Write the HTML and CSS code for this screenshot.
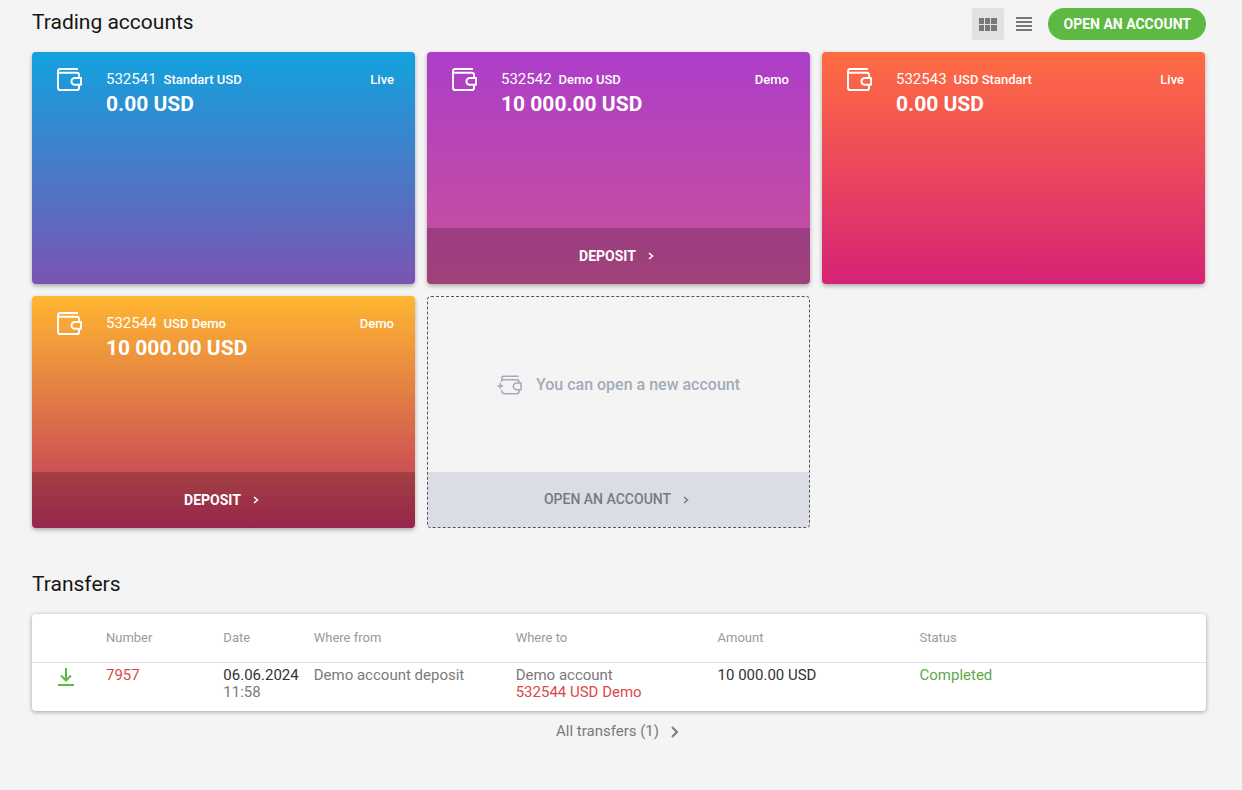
FILE: index.html
```html
<!DOCTYPE html>
<html lang="en">
<head>
<meta charset="utf-8">
<title>Trading accounts</title>
<meta name="viewport" content="width=device-width, initial-scale=1">
<link rel="stylesheet" href="styles.css">
</head>
<body>
<svg class="sprite" aria-hidden="true">
  <symbol id="wallet" viewBox="0 0 26 24" fill="none" stroke="currentColor" stroke-width="2" stroke-linecap="round" stroke-linejoin="round">
    <path d="M21 1H3.500Q1 1 1 3.500V20.500Q1 23 3.500 23H20.500Q23 23 23 20.500V18M1.500 5H20.500Q23 5 23 7.500V10"/>
    <path d="M25 10.500H18.500A3.500 3.500 0 0 0 18.500 17.500H25Z"/>
  </symbol>
  <symbol id="wallet-add" viewBox="0 0 26 20" fill="none" stroke="currentColor" stroke-width="1.600" stroke-linecap="round" stroke-linejoin="round">
    <path d="M22 1H7Q5 1 5 3V6M6 4.500H20.500Q23 4.500 23 7M23 15V16.500Q23 19 20.500 19H8Q5 19 5 16M1 11H6M3.500 8.500V13.500"/>
    <path d="M25 8H20.500A3.500 3.500 0 0 0 20.500 15H25Z"/>
  </symbol>
  <symbol id="chevron" viewBox="0 0 6 8" fill="none" stroke="currentColor" stroke-width="1.500">
    <path d="M1 1L4.500 4L1 7"/>
  </symbol>
</svg>
<main class="page">
  <section>
    <header class="toolbar">
      <h1 class="title">Trading accounts</h1>
      <div class="actions">
        <button class="view view-active" type="button" aria-label="Grid view">
          <svg width="18" height="13" viewBox="0 0 18 13" fill="currentColor"><path d="M0 0h5v6H0zM6 0h5v6H6zM12 0h6v6h-6zM0 7h5v6H0zM6 7h5v6H6zM12 7h6v6h-6z"/></svg>
        </button>
        <button class="view" type="button" aria-label="List view">
          <svg width="16" height="14" viewBox="0 0 16 14" fill="currentColor"><path d="M0 0h16v2H0zM0 4h16v2H0zM0 8h16v2H0zM0 12h16v2H0z"/></svg>
        </button>
        <button class="open" type="button">OPEN AN ACCOUNT</button>
      </div>
    </header>
    <div class="cards">
      <article class="card card-blue">
        <div class="card-head">
          <svg class="wallet"><use href="#wallet"/></svg>
          <div class="account">
            <div class="account-line"><span class="number">532541</span><span class="name">Standart USD</span><span class="kind">Live</span></div>
            <strong class="balance">0.00 USD</strong>
          </div>
        </div>
      </article>
      <article class="card card-purple">
        <div class="card-head">
          <svg class="wallet"><use href="#wallet"/></svg>
          <div class="account">
            <div class="account-line"><span class="number">532542</span><span class="name">Demo USD</span><span class="kind">Demo</span></div>
            <strong class="balance">10 000.00 USD</strong>
          </div>
        </div>
        <button class="card-action" type="button">DEPOSIT<svg class="chevron"><use href="#chevron"/></svg></button>
      </article>
      <article class="card card-red">
        <div class="card-head">
          <svg class="wallet"><use href="#wallet"/></svg>
          <div class="account">
            <div class="account-line"><span class="number">532543</span><span class="name">USD Standart</span><span class="kind">Live</span></div>
            <strong class="balance">0.00 USD</strong>
          </div>
        </div>
      </article>
      <article class="card card-orange">
        <div class="card-head">
          <svg class="wallet"><use href="#wallet"/></svg>
          <div class="account">
            <div class="account-line"><span class="number">532544</span><span class="name">USD Demo</span><span class="kind">Demo</span></div>
            <strong class="balance">10 000.00 USD</strong>
          </div>
        </div>
        <button class="card-action" type="button">DEPOSIT<svg class="chevron"><use href="#chevron"/></svg></button>
      </article>
      <article class="card card-new">
        <div class="new-text"><svg class="wallet-add"><use href="#wallet-add"/></svg>You can open a new account</div>
        <button class="card-action action-new" type="button">OPEN AN ACCOUNT<svg class="chevron"><use href="#chevron"/></svg></button>
      </article>
    </div>
  </section>
  <section class="transfers">
    <h2 class="title">Transfers</h2>
    <table class="table">
      <colgroup><col class="col-icon"><col class="col-number"><col class="col-date"><col class="col-wide"><col class="col-wide"><col class="col-wide"><col></colgroup>
      <thead>
        <tr><th></th><th>Number</th><th>Date</th><th>Where from</th><th>Where to</th><th>Amount</th><th>Status</th></tr>
      </thead>
      <tbody>
        <tr>
          <td class="icon-cell"><svg width="16" height="18" viewBox="0 0 16 18" fill="none" stroke="currentColor" stroke-width="2"><path d="M8 0V12M3 7.500L8 12.500L13 7.500M0 17H16"/></svg></td>
          <td><a class="link" href="#">7957</a></td>
          <td><span class="dark">06.06.2024</span><br>11:58</td>
          <td>Demo account deposit</td>
          <td>Demo account<br><a class="link" href="#">532544 USD Demo</a></td>
          <td class="dark">10 000.00 USD</td>
          <td class="done">Completed</td>
        </tr>
      </tbody>
    </table>
    <a class="all" href="#">All transfers (1)<svg width="8" height="12" viewBox="0 0 8 12" fill="none" stroke="currentColor" stroke-width="2"><path d="M1 1L6 6L1 11"/></svg></a>
  </section>
</main>
</body>
</html>
```
FILE: styles.css
```css
* { box-sizing: border-box; }
body {
  margin: 0;
  background: #f4f4f4;
  color: #7a7a7a;
  font: 14px/17px Roboto, "Liberation Sans", sans-serif;
}
button {
  border: 0;
  padding: 0;
  background: none;
  font: inherit;
  cursor: pointer;
}
a { text-decoration: none; }
.sprite { position: absolute; width: 0; height: 0; }
.page { padding: 8px 36px 24px 32px; }
.toolbar { display: flex; justify-content: space-between; margin-bottom: 12px; }
.title {
  margin: 0;
  color: #161616;
  font-size: 21px;
  font-weight: 400;
  line-height: 28px;
}
.actions { display: flex; align-items: center; gap: 4px; }
.view {
  display: flex;
  align-items: center;
  justify-content: center;
  width: 32px;
  height: 32px;
  border-radius: 2px;
  color: #777;
}
.view-active { background: #e1e1e1; }
.open {
  height: 32px;
  margin-left: 4px;
  padding: 0 15px;
  border-radius: 16px;
  background: #5cb942;
  color: #fff;
  font-size: 14px;
  font-weight: 700;
}
.cards {
  display: grid;
  grid-template-columns: repeat(3, 1fr);
  gap: 12px;
  padding-right: 1px;
}
.card {
  display: flex;
  flex-direction: column;
  justify-content: space-between;
  min-height: 232px;
  border-radius: 4px;
  overflow: hidden;
  color: #fff;
  box-shadow: 0 2px 4px rgba(0, 0, 0, .3);
}
.card-blue { background: linear-gradient(#12a2de, #7b54b2); }
.card-purple { background: linear-gradient(#ac3ec9, #ca5197); }
.card-red { background: linear-gradient(#ff6d42, #d62277); }
.card-orange { background: linear-gradient(#ffb631, #bc305e); }
.card-head { display: flex; gap: 24px; padding: 16px 21px 16px 25px; }
.wallet { flex: none; width: 25px; height: 23px; }
.account { flex: 1; padding-top: 1px; }
.account-line { display: flex; align-items: baseline; gap: 7px; line-height: 20px; }
.number { font-size: 15px; }
.name, .kind { font-size: 13px; font-weight: 500; }
.kind { margin-left: auto; }
.balance { display: block; font-size: 21px; font-weight: 700; line-height: 28px; }
.card-action {
  display: flex;
  align-items: center;
  justify-content: center;
  gap: 12px;
  height: 56px;
  padding-right: 4px;
  background: rgba(0, 0, 0, .2);
  color: #fff;
  font-weight: 700;
}
.chevron { width: 6px; height: 8px; }
.card-new { border: 1px dashed #555; box-shadow: none; }
.new-text {
  display: flex;
  flex: 1;
  align-items: center;
  justify-content: center;
  gap: 14px;
  color: #a3abb9;
  font-size: 16px;
  font-weight: 500;
}
.wallet-add { width: 25px; height: 20px; }
.action-new {
  height: 55px;
  background: #dadde5;
  color: #777b80;
  font-weight: 500;
}
.transfers { margin-top: 42px; }
.table {
  width: 100%;
  margin-top: 16px;
  table-layout: fixed;
  border-spacing: 0;
  border-radius: 4px;
  background: #fff;
  box-shadow: 0 1px 4px rgba(0, 0, 0, .35);
}
.table th {
  height: 49px;
  padding: 0 0 2px;
  border-bottom: 1px solid #e3e3e3;
  color: #9a9a9a;
  font-size: 13px;
  font-weight: 400;
  text-align: left;
}
.table td { height: 48px; padding: 4px 0 10px; font-size: 15px; vertical-align: top; }
.col-icon { width: 6.3%; }
.col-number { width: 10%; }
.col-date { width: 7.7%; }
.col-wide { width: 17.2%; }
.table .icon-cell { padding: 5px 0 0 26px; color: #5cb942; }
.link { color: #d9484a; }
.table .dark { color: #333; }
.table .done { color: #5fa94a; }
.all {
  display: flex;
  align-items: center;
  justify-content: center;
  gap: 12px;
  margin-top: 12px;
  padding-right: 3px;
  color: #7a7a7a;
  font-size: 15px;
}
```
